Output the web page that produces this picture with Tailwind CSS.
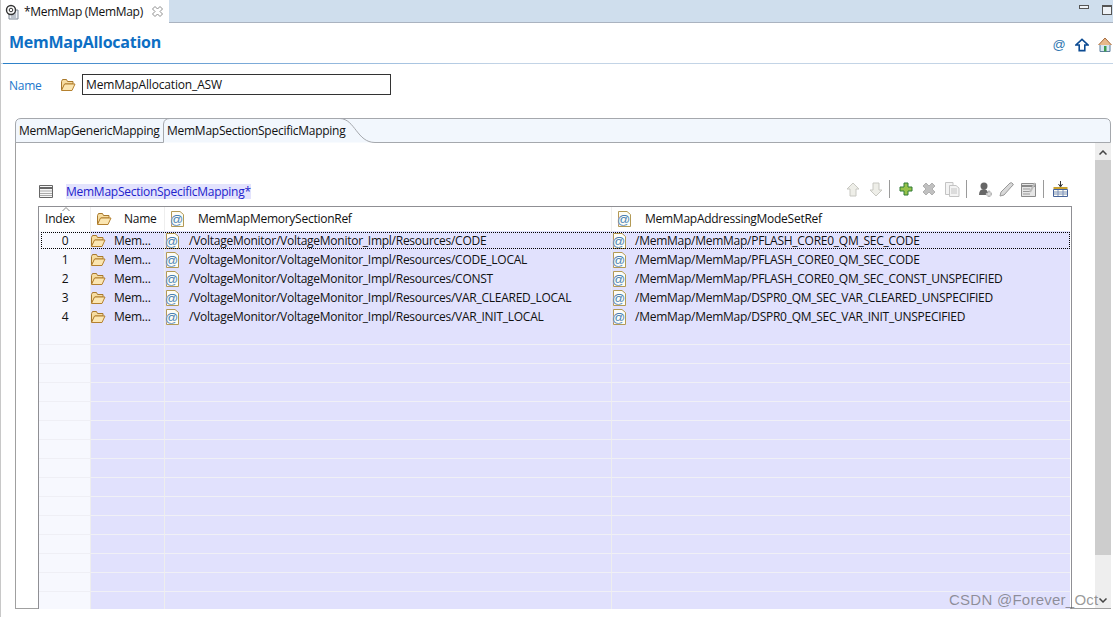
<!DOCTYPE html>
<html lang="en">
<head>
  <meta charset="UTF-8">
  <title>MemMap</title>
  <script src="https://cdn.jsdelivr.net/npm/@tailwindcss/browser@4"></script>
</head>
<body class="w-[1113px] h-[617px] overflow-hidden bg-white font-['Open_Sans','Liberation_Sans',sans-serif] text-[12px] tracking-[-0.26px] text-[#111] relative">

  <!-- icon sprites -->
  <svg class="hidden">
    <symbol id="folder" viewBox="0 0 16 16">
      <path d="M1.500 4.500 L2.500 2.500 H6.500 L7.500 4.500 H13 V7 H5 L1.500 13 Z" fill="#f6dca0" stroke="#a9792c"/>
      <path d="M4.500 7 H15 L12 13.500 H1.500 Z" fill="#fbe6b2" stroke="#b5812f"/>
    </symbol>
    <symbol id="atdoc" viewBox="0 0 16 16">
      <path d="M2.500 .5 H11 L14.500 3.500 V15.500 H2.500 Z" fill="#fdfcf5" stroke="#b39a55"/>
      <text x="1" y="12.500" font-size="13" font-family="Liberation Sans" fill="#2368a8" stroke="#fdfcf5" stroke-width=".15">@</text>
    </symbol>
    <linearGradient id="activeTab" x1="0" y1="0" x2="0" y2="1">
      <stop offset="0.45" stop-color="#e5edf6"/>
      <stop offset="0.55" stop-color="#ffffff"/>
    </linearGradient>
  </svg>

  <!-- editor tab bar -->
  <div class="h-[23px] flex bg-[#cfdeed] border-b border-[#aab3c0]">
    <div class="w-[169px] h-[23px] bg-white flex items-center pl-[5px] gap-[4px]">
      <svg class="w-[15px] h-[16px]" viewBox="0 0 15 16">
        <path d="M4 6 H13 V15 H4 Z" fill="#eef1f5" stroke="#7d8794"/>
        <path d="M6 9 H11 M6 11 H11 M6 13 H11" stroke="#8a94a0"/>
        <circle cx="6" cy="6" r="4.500" fill="#fff" stroke="#333" stroke-width="1.400"/>
        <circle cx="6" cy="6" r="1.800" fill="none" stroke="#333"/>
      </svg>
      <span class="whitespace-nowrap tracking-[-0.3px]">*MemMap (MemMap)</span>
      <svg class="w-[11px] h-[11px] ml-[5px]" viewBox="0 0 11 11" fill="none" stroke="#8d8d8d">
        <path d="M3 .5 L5.500 3 L8 .5 L10.500 3 L8 5.500 L10.500 8 L8 10.500 L5.500 8 L3 10.500 L.5 8 L3 5.500 L.5 3 Z"/>
      </svg>
    </div>
    <div class="ml-auto flex items-start gap-[13px] pr-[1px] pt-[5px]">
      <div class="w-[10px] h-[4px] border border-[#555] bg-[#eef2f7]"></div>
      <div class="w-[10px] h-[10px] border border-[#555] border-t-2 bg-[#eef2f7]"></div>
    </div>
  </div>

  <!-- form header -->
  <div class="h-[41px] flex items-center justify-between border-b border-[#c3d4e6] pl-[9px] pr-[1px] pb-[3px] relative">
    <h1 class="text-[16px] font-bold text-[#0d6fc4] tracking-[-0.25px]">MemMapAllocation</h1>
    <div class="flex items-center mt-[6px]">
      <span class="w-[12px] h-[14px] flex items-center justify-center font-['Liberation_Sans',sans-serif] text-[13px] leading-[14px] tracking-normal text-[#2f76b0]">@</span>
      <svg class="w-[14px] h-[14px] ml-[10px]" viewBox="0 0 15 14">
        <path d="M7.500 1 L14 7 H10.500 V13 H4.500 V7 H1 Z" fill="#fff" stroke="#0b4a92" stroke-width="1.700"/>
      </svg>
      <svg class="w-[14px] h-[15px] ml-[9px]" viewBox="0 0 14 15">
        <path d="M2 7 H12 V14.500 H2 Z" fill="#d6e6f3" stroke="#5d7f9d"/>
        <path d="M.5 8 L7 1 L13.500 8" fill="#e7b88a" stroke="#a66a3c"/>
        <path d="M6 9 H8.500 V14.500 H6 Z" fill="#3d9a4c"/>
      </svg>
    </div>
    <div class="absolute left-[3px] bottom-[-1px] w-[500px] h-px bg-gradient-to-r from-[#2a80c8] to-[#c3d4e6]"></div>
  </div>

  <!-- name row -->
  <div class="h-[41px] flex items-center pl-[9px]">
    <span class="w-[51px] mt-[3px] text-[#2277cc]">Name</span>
    <svg class="w-[16px] h-[16px] mt-[1px]"><use href="#folder"/></svg>
    <div class="ml-[6px] w-[309px] h-[21px] border border-[#333] flex items-center pl-[3px] whitespace-nowrap tracking-[-0.16px]">MemMapAllocation_ASW</div>
  </div>

  <!-- tab folder -->
  <div class="ml-[15px] mt-[13px] w-[1096px]">
    <div class="h-[25px] relative">
      <svg class="absolute left-0 top-0" width="1096" height="25" viewBox="0 0 1096 25">
        <path d="M.5 25 V6 Q.5 .5 6 .5 H1090 Q1095.500 .5 1095.500 6 V24.500 H.5 Z" fill="#f2f7fd"/>
        <path d="M148.500 25 V6 Q149 .5 155 .5 H325 C340 1 342 24.500 360 24.500 V25 H148.500 Z" fill="url(#activeTab)"/>
        <path d="M.5 25 V6 Q.5 .5 6 .5 H1090 Q1095.500 .5 1095.500 6 V24.500 H360" fill="none" stroke="#a5a8ad"/>
        <path d="M.5 24.500 H148.500 V6 Q149 .5 155 .5 H325 C340 1 342 24.500 360 24.500" fill="none" stroke="#a5a8ad"/>
      </svg>
      <div class="absolute left-[4px] top-[4px] whitespace-nowrap">MemMapGenericMapping</div>
      <div class="absolute left-[152px] top-[4px] whitespace-nowrap">MemMapSectionSpecificMapping</div>
    </div>

    <!-- tab pane -->
    <div class="h-[466px] border-l border-b border-[#a0a0a0] flex">
      <div class="flex-1 min-w-0 pl-[22px]">
        <div class="h-[63px] w-[1034px] flex items-end justify-between pr-[4px]">
          <div class="flex items-center pb-[7px] pl-[1px]">
            <svg class="w-[14px] h-[13px]" viewBox="0 0 14 13">
              <path d="M.5 .5 H13.500 V12.500 H.5 Z" fill="#f6f6f6" stroke="#666"/>
              <path d="M.5 3 H13.500" stroke="#666" stroke-width="2"/>
              <path d="M1 6 H13 M1 8.500 H13 M1 10.500 H13" stroke="#aaa"/>
            </svg>
            <span class="ml-[13px] bg-[#e3e3fd] text-[#2222cc] leading-[15px] whitespace-nowrap">MemMapSectionSpecificMapping*</span>
          </div>
          <div class="flex items-center pb-[8px]">
            <svg class="w-[14px] h-[15px]" viewBox="0 0 14 15"><path d="M7 1 L13 7 H10 V14 H4 V7 H1 Z" fill="#eeeee8" stroke="#c8c8c2"/></svg>
            <svg class="w-[14px] h-[15px] ml-[9px]" viewBox="0 0 14 15"><path d="M7 14 L13 8 H10 V1 H4 V8 H1 Z" fill="#eeeee8" stroke="#c8c8c2"/></svg>
            <div class="w-px h-[18px] bg-[#9a9a9a] ml-[6px]"></div>
            <svg class="w-[14px] h-[14px] ml-[9px]" viewBox="0 0 14 14"><path d="M5 1 H9 V5 H13 V9 H9 V13 H5 V9 H1 V5 H5 Z" fill="#97c24a" stroke="#2e7a34"/></svg>
            <svg class="w-[14px] h-[14px] ml-[9px]" viewBox="0 0 14 14"><path d="M1 4 L4 1 L7 4 L10 1 L13 4 L10 7 L13 10 L10 13 L7 10 L4 13 L1 10 L4 7 Z" fill="#c0c0c0" stroke="#b0b0b0"/></svg>
            <svg class="w-[15px] h-[15px] ml-[9px]" viewBox="0 0 15 15" fill="#f4f4f4" stroke="#c4c4c4"><path d="M.5 .5 H8 V12.500 H.5 Z"/><path d="M4.500 3.500 H11 L14 6 V14.500 H4.500 Z"/><path d="M6 7 H12 M6 9 H12 M6 11 H12" fill="none"/></svg>
            <div class="w-px h-[18px] bg-[#9a9a9a] ml-[6px]"></div>
            <svg class="w-[14px] h-[15px] ml-[11px]" viewBox="0 0 14 15"><circle cx="6" cy="4" r="3.500" fill="#666"/><path d="M1 13 Q1 7 6 7 Q10 7 10 13 Z" fill="#666"/><path d="M10 9 H12 V11 H14 V13 H12 V15 H10 V13 H8 V11 H10 Z" fill="#ddd" stroke="#888" stroke-width=".5"/></svg>
            <svg class="w-[15px] h-[15px] ml-[7px]" viewBox="0 0 15 15"><path d="M1 14 L2 10 L11 1 Q13 0 14 2 Q15 3 13 4 L5 13 Z" fill="#d8d8d8" stroke="#999"/></svg>
            <svg class="w-[15px] h-[15px] ml-[7px]" viewBox="0 0 15 15"><path d="M.5 1.500 H14.500 V14.500 H.5 Z" fill="#e6e6e6" stroke="#8a8a8a"/><path d="M.5 4 H14.500" stroke="#8a8a8a" stroke-width="2"/><path d="M2 7 H9 M2 9.500 H9 M2 12 H9" stroke="#999"/><path d="M9 10 L14 1" stroke="#bbb" stroke-width="2"/></svg>
            <div class="w-px h-[18px] bg-[#9a9a9a] ml-[7px]"></div>
            <svg class="w-[15px] h-[16px] ml-[9px]" viewBox="0 0 15 16"><path d="M.5 8.500 H14.500 V15.500 H.5 Z" fill="#fdfdf5" stroke="#46639a"/><path d="M.5 7 H14.500" stroke="#caa12c" stroke-width="2"/><path d="M1 11 H14 M1 13 H14 M5 9 V15 M10 9 V15" stroke="#7d92ba"/><path d="M7.500 0 V5 M5.500 3 L7.500 6 L9.500 3" fill="none" stroke="#333"/></svg>
          </div>
        </div>

        <!-- table -->
        <div class="w-[1034px] h-[403px] border-t border-l border-r border-[#8f8f94] overflow-hidden pr-px">
          <div class="h-[24px] grid grid-cols-[52px_74px_447px_1fr] relative">
            <div class="border-r border-[#eeeeee] text-center leading-[23px] pr-[9px]">Index</div>
            <div class="border-r border-[#eeeeee] flex items-center pl-[5px]">
              <svg class="w-[16px] h-[16px]"><use href="#folder"/></svg>
              <span class="ml-[12px] pb-[1px]">Name</span>
            </div>
            <div class="border-r border-[#eeeeee] flex items-center pl-[4px]">
              <svg class="w-[16px] h-[16px]"><use href="#atdoc"/></svg>
              <span class="ml-[13px] pb-[1px]">MemMapMemorySectionRef</span>
            </div>
            <div class="flex items-center pl-[4px]">
              <svg class="w-[16px] h-[16px]"><use href="#atdoc"/></svg>
              <span class="ml-[13px] pb-[1px]">MemMapAddressingModeSetRef</span>
            </div>
            <svg class="absolute left-[23px] top-[0px]" width="8" height="5" viewBox="0 0 8 5" fill="none" stroke="#888"><path d="M.5 4 L4 .5 L7.500 4"/></svg>
          </div>
          <div id="rows"></div>
        </div>
      </div>

      <!-- scrollbar -->
      <div class="w-[16px] h-[465px] bg-[#eeeeee] relative pt-[17px]">
        <div class="h-[395px] bg-[#cdcdcd]"></div>
        <svg class="absolute left-[4px] top-[7px]" width="8" height="5" viewBox="0 0 8 5" fill="none" stroke="#444" stroke-width="1.500"><path d="M.5 4.500 L4 1 L7.500 4.500"/></svg>
        <svg class="absolute left-[4px] bottom-[5px]" width="8" height="5" viewBox="0 0 8 5" fill="none" stroke="#444" stroke-width="1.500"><path d="M.5 .5 L4 4 L7.500 .5"/></svg>
      </div>
    </div>
  </div>

  <!-- left window edge -->
  <div class="absolute left-0 top-0 w-px h-full bg-[#c8c8c8]"></div>

  <!-- watermark -->
  <div class="absolute left-[949px] top-[591px] text-[15px] leading-[18px] font-['Liberation_Sans',sans-serif] text-[#555]/60 tracking-[0.25px] whitespace-nowrap">CSDN @Forever_Oct</div>

  <script>
    const rows = [
      ['/VoltageMonitor/VoltageMonitor_Impl/Resources/CODE', '/MemMap/MemMap/PFLASH_CORE0_QM_SEC_CODE'],
      ['/VoltageMonitor/VoltageMonitor_Impl/Resources/CODE_LOCAL', '/MemMap/MemMap/PFLASH_CORE0_QM_SEC_CODE'],
      ['/VoltageMonitor/VoltageMonitor_Impl/Resources/CONST', '/MemMap/MemMap/PFLASH_CORE0_QM_SEC_CONST_UNSPECIFIED'],
      ['/VoltageMonitor/VoltageMonitor_Impl/Resources/VAR_CLEARED_LOCAL', '/MemMap/MemMap/DSPR0_QM_SEC_VAR_CLEARED_UNSPECIFIED'],
      ['/VoltageMonitor/VoltageMonitor_Impl/Resources/VAR_INIT_LOCAL', '/MemMap/MemMap/DSPR0_QM_SEC_VAR_INIT_UNSPECIFIED']
    ];
    let html = '';
    for (let i = 0; i < 20; i++) {
      const row = rows[i];
      html += `<div class="h-[19px] grid grid-cols-[52px_74px_447px_1fr] relative">
        <div class="bg-[#f7f8fe] border-b border-[#efeff5] border-r border-r-[#eeeeee] text-center leading-[19px] pl-[1px]">${row ? i : ''}</div>
        <div class="bg-[#e1e1fd] border-b border-[#f0f0f6] border-r border-r-[#eeeeee] flex items-center">
          ${row ? '<svg class="w-[16px] h-[16px] -ml-[1px]"><use href="#folder"/></svg><span class="ml-[8px] pt-[1px]">Mem...</span>' : ''}
        </div>
        <div class="bg-[#e1e1fd] border-b border-[#f0f0f6] border-r border-r-[#eeeeee] flex items-center whitespace-nowrap">
          ${row ? `<svg class="w-[16px] h-[16px] -ml-[1px]"><use href="#atdoc"/></svg><span class="ml-[9px] pt-[1px]">${row[0]}</span>` : ''}
        </div>
        <div class="bg-[#e1e1fd] border-b border-[#f0f0f6] flex items-center whitespace-nowrap">
          ${row ? `<svg class="w-[16px] h-[16px] -ml-[1px]"><use href="#atdoc"/></svg><span class="ml-[8px] pt-[1px]">${row[1]}</span>` : ''}
        </div>
        ${i === 0 ? '<div class="absolute left-[2px] right-0 top-[1px] h-[17px] border border-dotted border-black"></div>' : ''}
      </div>`;
    }
    document.getElementById('rows').innerHTML = html;
  </script>
</body>
</html>
